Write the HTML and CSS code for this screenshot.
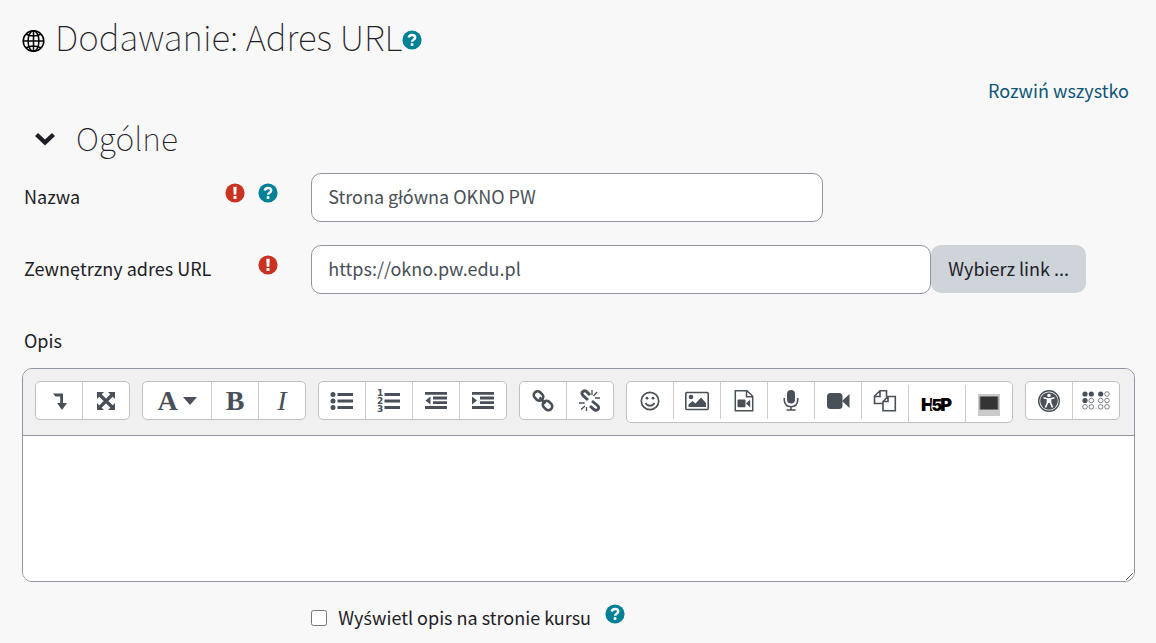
FILE: index.html
```html
<!DOCTYPE html>
<html lang="pl">
  <head>
    <meta charset="UTF-8" />
    <meta name="viewport" content="width=device-width, initial-scale=1.0" />
    <title>Dodawanie: Adres URL</title>
    <link rel="stylesheet" href="styles.css">
  </head>

  <body>
    <!-- shared status icons -->
    <svg class="sprite" aria-hidden="true">
      <symbol id="icon-help" viewBox="0 0 20 20">
        <circle cx="10" cy="10" r="9.6" fill="#008196" />
        <path d="M6.7 7.6C7.1 5.6 8.4 4.9 10 4.9c1.900 0 3.200 1.100 3.200 2.600 0 2.300-3.100 2.100-3.100 4.200" fill="none" stroke="#fff" stroke-width="2.500" />
        <path d="M8.700 13.200h2.700v2.700H8.700z" fill="#fff" />
      </symbol>
      <symbol id="icon-required" viewBox="0 0 20 20">
        <circle cx="10" cy="10" r="9.6" fill="#ca3120" />
        <path d="M8.300 3.700h3.400l-.4 8H8.700zM8.500 13.100h3v2.900h-3z" fill="#fff" />
      </symbol>
    </svg>

    <main class="page">
      <h1 class="page-title">
        <svg class="globe" viewBox="0 0 24 24" fill="none" stroke="#000" stroke-width="1.500">
          <circle cx="11.500" cy="12" r="10.300" />
          <ellipse cx="11.500" cy="12" rx="5.400" ry="10.300" />
          <path d="M11.500 1.700v20.600M1.200 12h20.600M4 5.300q7.500 3.400 15 0M4 18.700q7.500-3.400 15 0" />
        </svg>
        <span>Dodawanie: Adres URL</span>
        <a class="hint" href="#" aria-label="Pomoc"><svg><use href="#icon-help" /></svg></a>
      </h1>

      <form>
        <div class="expand">
          <a href="#">Rozwiń wszystko</a>
        </div>

        <h2 class="section-title">
          <svg viewBox="0 0 22 14"><path d="M1 4l3-3 7 6.500L18 1l3 3-10 9.500z" fill="#1d2125" /></svg>
          <span>Ogólne</span>
        </h2>

        <div class="field">
          <div class="field-label">
            <label for="name">Nazwa</label>
            <span class="hints">
              <span class="hint"><svg><use href="#icon-required" /></svg></span>
              <a class="hint" href="#" aria-label="Pomoc"><svg><use href="#icon-help" /></svg></a>
            </span>
          </div>
          <div class="field-input">
            <input type="text" id="name" class="input-name" value="Strona główna OKNO PW" />
          </div>
        </div>

        <div class="field">
          <div class="field-label">
            <label for="url">Zewnętrzny adres URL</label>
            <span class="hints">
              <span class="hint"><svg><use href="#icon-required" /></svg></span>
            </span>
          </div>
          <div class="field-input">
            <input type="text" id="url" class="input-url" value="https://okno.pw.edu.pl" />
            <button type="button" class="btn-link">Wybierz link ...</button>
          </div>
        </div>

        <label class="editor-label" for="intro">Opis</label>
        <div class="editor">
          <div class="toolbar">
            <div class="group">
              <button type="button" aria-label="Więcej przycisków"><svg viewBox="0 0 24 24"><path d="M6 4.500h10V14h4l-5 7-5-7h3.200V7.500H8.500z" /></svg></button>
              <button type="button" aria-label="Pełny ekran"><svg viewBox="0 0 24 24"><path d="M3 3h7L3 10zM21 3v7l-7-7zM3 21v-7l7 7zM21 21h-7l7-7z" /><path d="M5 5l14 14M19 5L5 19" stroke-width="3.200" /></svg></button>
            </div>

            <div class="group">
              <button type="button" class="wide" aria-label="Styl akapitu"><b class="glyph">A</b><svg class="caret" viewBox="0 0 14 8"><path d="M0 0h14L7 8z" /></svg></button>
              <button type="button" aria-label="Pogrubienie"><b class="glyph">B</b></button>
              <button type="button" aria-label="Kursywa"><i class="glyph">I</i></button>
            </div>

            <div class="group">
              <button type="button" aria-label="Lista punktowana"><svg viewBox="0 0 24 24"><circle cx="3" cy="5.500" r="2.500" /><circle cx="3" cy="12" r="2.500" /><circle cx="3" cy="18.500" r="2.500" /><path d="M7.500 4H23v3H7.500zM7.500 10.500H23v3H7.500zM7.500 17H23v3H7.500z" /></svg></button>
              <button type="button" aria-label="Lista numerowana"><svg viewBox="0 0 24 24"><text x="0" y="7">1</text><text x="0" y="15">2</text><text x="0" y="23">3</text><path d="M7.500 4H23v3H7.500zM7.500 10.500H23v3H7.500zM7.500 17H23v3H7.500z" /></svg></button>
              <button type="button" aria-label="Zmniejsz wcięcie"><svg viewBox="0 0 24 24"><path d="M1 3h22v2.800H1zM9 7.600h14v2.800H9zM9 12.200h14V15H9zM1 17h22v3H1zM1.500 11.500l5-4v8z" /></svg></button>
              <button type="button" aria-label="Zwiększ wcięcie"><svg viewBox="0 0 24 24"><path d="M1 3h22v2.800H1zM9 7.600h14v2.800H9zM9 12.200h14V15H9zM1 17h22v3H1zM6 11.500l-5-4v8z" /></svg></button>
            </div>

            <div class="group">
              <button type="button" aria-label="Link"><svg viewBox="0 0 24 24"><g fill="none" stroke-width="2.600"><rect x="2.500" y="3.200" width="10" height="7.600" rx="3.500" transform="rotate(45 7.500 7)" /><rect x="11.500" y="12.700" width="10" height="7.600" rx="3.500" transform="rotate(45 16.500 16.500)" /><path d="M8.500 8.500l6 6" /></g></svg></button>
              <button type="button" aria-label="Usuń link"><svg viewBox="0 0 24 24"><path d="M10 11L5 6.500Q2.800 4 5 2.500q2-1.500 4 .5l3 3M14 12l5.500 4.500q2.300 2.300.2 4.200-2 1.500-4.200-.6L12 17" stroke-width="2.900" fill="none" /><path d="M14 1v5M19 3l-3.500 4M17 9h5M1 14h5.500M3 20.500L7 17M8.500 18v4" stroke-width="1.300" /></svg></button>
            </div>

            <div class="group">
              <button type="button" aria-label="Emoji"><svg viewBox="0 0 24 24"><circle cx="12" cy="12" r="8.700" fill="none" stroke-width="1.700" /><circle cx="9" cy="9.200" r="1.400" /><circle cx="15" cy="9.200" r="1.400" /><path d="M7.500 14q1.500 2.700 4.500 2.700t4.500-2.700" fill="none" stroke-width="1.700" /></svg></button>
              <button type="button" aria-label="Obraz"><svg viewBox="0 0 24 24"><rect x=".8" y="3.500" width="22.400" height="17" rx="1" fill="none" stroke-width="1.600" /><circle cx="6" cy="8" r="2.300" /><path d="M3.500 18v-2.500L7.500 12l3 2.500 5.500-6 5 5.500v4z" /></svg></button>
              <button type="button" aria-label="Multimedia"><svg viewBox="0 0 24 24"><path d="M3.300 1.700H15l5.700 5.600v14.500H3.300zM14.500 2v5.700h6" fill="none" stroke-width="1.500" /><rect x="5.500" y="10.500" width="8" height="7.800" rx="1" /><path d="M14 14.400l4.200-4v8z" /></svg></button>
              <button type="button" aria-label="Nagraj dźwięk"><svg viewBox="0 0 24 24"><rect x="8" y="1" width="8" height="13.500" rx="4" /><path d="M5.300 9v2.500q.4 6 6.700 6.200 6.300-.2 6.700-6.200V9M12 17.500v3.500M7.500 21h9" fill="none" stroke-width="1.600" /></svg></button>
              <button type="button" aria-label="Nagraj wideo"><svg viewBox="0 0 24 24"><rect x="1" y="4" width="15.500" height="16" rx="3.500" /><path d="M16 12l7.500-7v14z" /></svg></button>
              <button type="button" aria-label="Pliki"><svg viewBox="0 0 24 24"><path d="M9.500 14.500H1.500V7L7 1.700h6.500v6M7 1.700V7.500H1.500M10 12.500l5-5h7.300v14.300H10zM15 7.500v5h-5" fill="none" stroke-width="1.600" /></svg></button>
              <button type="button" class="low h5p" aria-label="Wstaw H5P"><svg viewBox="0 0 34 24"><text x="1" y="19">H<tspan class="five" dx="-3">5</tspan><tspan dx="-2">P</tspan></text></svg></button>
              <button type="button" class="low" aria-label="Panopto"><svg viewBox="0 0 24 24"><path d="M1 2h22v22H1z" fill="#cacaca" /><path d="M3 4.500h18v13H3z" fill="#333" stroke="#777" stroke-width="1" /></svg></button>
            </div>

            <div class="group">
              <button type="button" aria-label="Sprawdź dostępność"><svg viewBox="0 0 24 24"><circle cx="12" cy="12" r="10.300" fill="none" stroke-width="1.400" /><circle cx="12" cy="12" r="8.800" /><circle cx="12" cy="6.500" r="1.800" fill="#fff" /><path d="M6.500 8.800l4 1v3.700l-2 5M17.500 8.800l-4 1v3.700l2 5M10.500 11h3" fill="none" stroke="#fff" stroke-width="1.700" /><path d="M10 9h4v5h-4z" fill="#fff" /></svg></button>
              <button type="button" aria-label="Pomocnik czytnika ekranu"><svg class="braille" viewBox="0 0 28 24"><g><circle cx="3" cy="5" r="2.600" /><circle cx="9.300" cy="5" r="2.600" /><circle cx="3" cy="11.500" r="2.600" /><circle cx="18.700" cy="5" r="2.600" /></g><g fill="none" stroke-width=".7"><circle cx="25" cy="5" r="2.300" /><circle cx="9.300" cy="11.500" r="2.300" /><circle cx="18.700" cy="11.500" r="2.300" /><circle cx="25" cy="11.500" r="2.300" /><circle cx="3" cy="17.800" r="2.300" /><circle cx="9.300" cy="17.800" r="2.300" /><circle cx="18.700" cy="17.800" r="2.300" /><circle cx="25" cy="17.800" r="2.300" /></g></svg></button>
            </div>
          </div>
          <textarea id="intro"></textarea>
        </div>

        <div class="field field-check">
          <div></div>
          <div class="field-input">
            <input type="checkbox" id="showdescription" />
            <label for="showdescription">Wy<span class="accent">ś</span>wietl opis na stronie kursu</label>
            <a class="hint" href="#" aria-label="Pomoc"><svg><use href="#icon-help" /></svg></a>
          </div>
        </div>
      </form>
    </main>
  </body>
</html>
```
FILE: styles.css
```css
* {
  box-sizing: border-box;
}

body {
  margin: 0;
  background-color: #f8f8f8;
  color: #1d2125;
  font-family: "Noto Sans CJK JP", "Open Sans", sans-serif;
  font-size: 18px;
  line-height: 28px;
}

button,
input,
textarea {
  font: inherit;
}

.sprite {
  position: absolute;
  width: 0;
  height: 0;
}

.page {
  padding: 12px 21px 12px 22px;
}

.page-title,
.section-title {
  display: flex;
  align-items: center;
  margin: 0;
  font-weight: 100;
}

.page-title {
  margin-bottom: 4px;
  font-size: 35px;
  line-height: 48px;
}

.globe {
  width: 24px;
  height: 24px;
  margin: 10px 9px 0 0;
}

.hint,
.hint svg {
  display: block;
  width: 20px;
  height: 20px;
}

.page-title .hint {
  margin-top: 8px;
}

.expand {
  display: flex;
  justify-content: flex-end;
  padding: 12px 6px 1px 0;
}

.expand a {
  color: #0f5676;
  text-decoration: none;
}

.section-title {
  gap: 20px;
  padding-left: 12px;
  margin: 8px 0 12px;
  font-size: 32px;
  line-height: 48px;
}

.section-title svg {
  width: 22px;
  height: 14px;
  margin-top: 4px;
}

.field {
  display: grid;
  grid-template-columns: 25% 1fr;
  column-gap: 11px;
  margin-bottom: 23px;
}

.field-label {
  display: flex;
  justify-content: space-between;
  padding: 9px 22px 0 2px;
}

.hints {
  display: flex;
  gap: 13px;
  margin-top: 1px;
}

.field-input {
  display: flex;
  align-items: flex-start;
}

input[type="text"] {
  height: 49px;
  padding: 0 16px 4px;
  border: 1px solid #8f959e;
  border-radius: 10px;
  background-color: #fff;
  color: #495057;
}

.input-name {
  width: 512px;
}

.input-url {
  width: 620px;
}

.btn-link {
  height: 48px;
  padding: 0 17px 2px;
  border: none;
  border-radius: 10px;
  background-color: #ced4da;
  color: #1d2125;
}

.editor-label {
  display: block;
  padding: 9px 2px 14px;
}

.editor {
  border: 1px solid #8f959e;
  border-radius: 10px;
  overflow: hidden;
}

.toolbar {
  display: flex;
  align-items: flex-start;
  gap: 12px;
  padding: 12px;
  border-bottom: 1px solid #8f959e;
  background-color: #f0f0f0;
}

.group {
  display: flex;
  border: 1px solid #c0c0c0;
  border-radius: 5px;
  background-color: #fff;
}

.group button {
  display: flex;
  align-items: center;
  justify-content: center;
  width: 47px;
  height: 37px;
  padding: 0;
  border: none;
  border-left: 1px solid #ccc;
  background: none;
  color: #495057;
}

.group button:first-child {
  width: 46px;
  border-left: none;
}

.group button.wide {
  gap: 5px;
  width: 68px;
}

.group button.low {
  margin-top: 3px;
}

.group button.h5p {
  width: 57px;
}

.group svg {
  width: 24px;
  height: 24px;
  fill: #495057;
  stroke: #495057;
  stroke-width: 0;
}

.group svg text {
  font: bold 9px "DejaVu Sans", sans-serif;
}

.group .caret {
  width: 14px;
  height: 8px;
}

.group .h5p svg {
  width: 34px;
}

.group .h5p text {
  fill: #000;
  font: 900 18px Inter, sans-serif;
}

.group .h5p .five {
  stroke: #fff;
  stroke-width: 2px;
  paint-order: stroke;
  font-size: 16px;
}

.group .braille {
  width: 28px;
}

.glyph {
  font-family: "Liberation Serif", serif;
  font-size: 28px;
  line-height: 28px;
}

textarea {
  display: block;
  width: 100%;
  height: 145px;
  padding: 12px;
  border: none;
  outline: none;
  resize: vertical;
}

.field-check {
  margin: 21px 0 0;
}

.field-check input {
  width: 16px;
  height: 16px;
  margin: 7px 11px 0 0;
}

.field-check .hint {
  margin: 1px 0 0 14px;
}

.accent {
  font-family: "Open Sans", sans-serif;
  line-height: 1;
}
```
